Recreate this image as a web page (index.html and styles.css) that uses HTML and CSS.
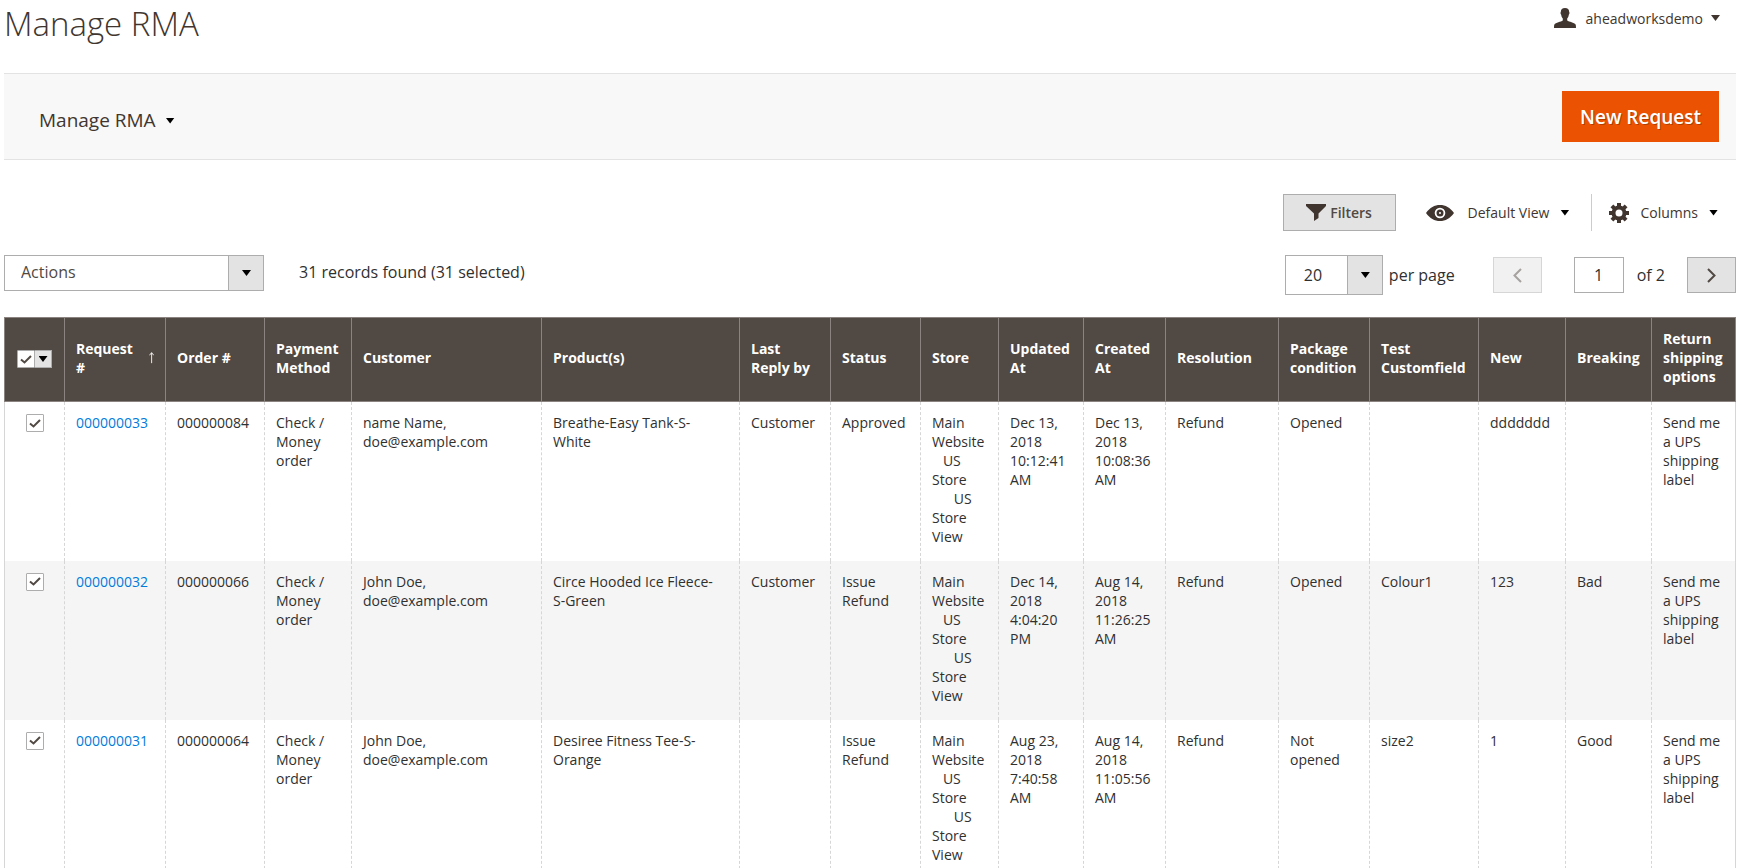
FILE: index.html
```html
<!DOCTYPE html>
<html lang="en">
<head>
  <meta charset="UTF-8" />
  <meta name="viewport" content="width=device-width, initial-scale=1" />
  <title>Manage RMA</title>
  <link rel="stylesheet" href="styles.css">
</head>
<body>
  <header class="page-header">
    <h1 class="page-title">Manage RMA</h1>
    <button type="button" class="user-menu">
      <svg class="icon-user" viewBox="0 0 22 20" width="22" height="20" fill="#41362f"><path d="M11 0C8.300 0 6.800 1.600 6.800 4C6.300 4.300 6.400 6.200 7.200 6.700C7.400 8.400 8 9.600 8.800 10.400V12.600C7 14 1.600 14.600 .4 16.400C0 17.200 0 18.800 0 20H22C22 18.800 22 17.200 21.600 16.400C20.400 14.600 15 14 13.200 12.600V10.400C14 9.600 14.600 8.400 14.800 6.700C15.600 6.200 15.700 4.300 15.200 4C15.200 1.600 13.700 0 11 0Z"/></svg>
      <span>aheadworksdemo</span>
      <span class="caret caret-soft"></span>
    </button>
  </header>

  <div class="page-actions">
    <button type="button" class="section-menu">Manage RMA <span class="caret"></span></button>
    <button type="button" class="btn-primary">New Request</button>
  </div>

  <div class="grid-controls">
    <button type="button" class="btn-filters">
      <svg viewBox="0 0 20 17" width="20" height="17" fill="#41362f"><path d="M0 0H20V2L12.500 9.500V14L8 17V9.500L0 2Z"/></svg>
      Filters
    </button>
    <button type="button" class="control view-control">
      <svg viewBox="0 0 28 16" width="28" height="16"><path fill="#41362f" fill-rule="evenodd" d="M0 8C4 2.500 8.500 0 14 0S24 2.500 28 8C24 13.500 19.500 16 14 16S4 13.500 0 8ZM14 2.700A5.300 5.300 0 1 0 14 13.300A5.300 5.300 0 1 0 14 2.700Z"/><circle cx="14" cy="8" r="3.500" fill="#41362f"/><circle cx="14" cy="8" r="1" fill="#fff"/></svg>
      <span>Default View</span>
      <span class="caret"></span>
    </button>
    <button type="button" class="control columns-control">
      <svg viewBox="-10 -10 20 20" width="20" height="20"><g fill="#41362f"><rect id="tooth" x="-2" y="-10" width="4" height="20"/><use href="#tooth" transform="rotate(45)"/><use href="#tooth" transform="rotate(90)"/><use href="#tooth" transform="rotate(135)"/><circle r="7.500"/></g><circle r="3.500" fill="#fff"/></svg>
      <span>Columns</span>
      <span class="caret"></span>
    </button>
  </div>

  <div class="grid-toolbar">
    <div class="select-box actions-box">
      <select class="select" aria-label="Actions">
        <option>Actions</option>
      </select>
    </div>
    <div class="records">31 records found (31 selected)</div>
    <div class="pager">
      <div class="select-box limit-box">
        <select class="select" id="limit">
          <option>20</option>
        </select>
      </div>
      <label class="limit-label" for="limit">per page</label>
      <button type="button" class="page-btn" aria-label="Previous page" disabled>
        <svg viewBox="0 0 9 15" width="9" height="15" fill="none" stroke="#a6a29f" stroke-width="2"><path d="M8 1L1.500 7.500L8 14"/></svg>
      </button>
      <input type="text" class="page-input" id="page" value="1">
      <label class="page-label" for="page">of 2</label>
      <button type="button" class="page-btn" aria-label="Next page">
        <svg viewBox="0 0 9 15" width="9" height="15" fill="none" stroke="#514943" stroke-width="2"><path d="M1 1L7.500 7.500L1 14"/></svg>
      </button>
    </div>
  </div>

  <table class="data-grid">
    <colgroup>
      <col class="col-check"><col class="col-request"><col class="col-order"><col class="col-payment">
      <col class="col-customer"><col class="col-product"><col class="col-reply"><col class="col-status">
      <col class="col-store"><col class="col-updated"><col class="col-created"><col class="col-resolution">
      <col class="col-package"><col class="col-custom"><col class="col-new"><col class="col-breaking">
      <col class="col-shipping">
    </colgroup>
    <thead>
      <tr>
        <th class="check-cell">
          <div class="mass-select">
            <input type="checkbox" class="checkbox" aria-label="Select all" checked>
            <button type="button" class="mass-toggle" aria-label="Selection options"><span class="caret"></span></button>
          </div>
        </th>
        <th><div class="sorted"><span>Request #</span> <svg viewBox="0 0 6 13" width="6" height="13" fill="none" stroke="#fff"><path d="M3 13V1M.5 4L3 1L5.500 4"/></svg></div></th>
        <th>Order #</th>
        <th>Payment Method</th>
        <th>Customer</th>
        <th>Product(s)</th>
        <th>Last Reply by</th>
        <th>Status</th>
        <th>Store</th>
        <th>Updated At</th>
        <th>Created At</th>
        <th>Resolution</th>
        <th>Package condition</th>
        <th>Test Customfield</th>
        <th>New</th>
        <th>Breaking</th>
        <th>Return shipping options</th>
      </tr>
    </thead>
    <tbody>
      <tr>
        <td class="check-cell"><input type="checkbox" class="checkbox" aria-label="Select 000000033" checked></td>
        <td><a href="#">000000033</a></td>
        <td>000000084</td>
        <td>Check / Money order</td>
        <td>name Name,<br>doe@example.com</td>
        <td>Breathe-Easy Tank-S-White</td>
        <td>Customer</td>
        <td>Approved</td>
        <td>Main Website<br>&nbsp;&nbsp;&nbsp;US Store<br>&nbsp;&nbsp;&nbsp;&nbsp;&nbsp;&nbsp;US Store View</td>
        <td>Dec 13, 2018 10:12:41 AM</td>
        <td>Dec 13, 2018 10:08:36 AM</td>
        <td>Refund</td>
        <td>Opened</td>
        <td></td>
        <td>ddddddd</td>
        <td></td>
        <td>Send me a UPS shipping label</td>
      </tr>
      <tr>
        <td class="check-cell"><input type="checkbox" class="checkbox" aria-label="Select 000000032" checked></td>
        <td><a href="#">000000032</a></td>
        <td>000000066</td>
        <td>Check / Money order</td>
        <td>John Doe,<br>doe@example.com</td>
        <td>Circe Hooded Ice Fleece-<span class="nowrap">S-Green</span></td>
        <td>Customer</td>
        <td>Issue Refund</td>
        <td>Main Website<br>&nbsp;&nbsp;&nbsp;US Store<br>&nbsp;&nbsp;&nbsp;&nbsp;&nbsp;&nbsp;US Store View</td>
        <td>Dec 14, 2018 4:04:20 PM</td>
        <td>Aug 14, 2018 11:26:25 AM</td>
        <td>Refund</td>
        <td>Opened</td>
        <td>Colour1</td>
        <td>123</td>
        <td>Bad</td>
        <td>Send me a UPS shipping label</td>
      </tr>
      <tr>
        <td class="check-cell"><input type="checkbox" class="checkbox" aria-label="Select 000000031" checked></td>
        <td><a href="#">000000031</a></td>
        <td>000000064</td>
        <td>Check / Money order</td>
        <td>John Doe,<br>doe@example.com</td>
        <td>Desiree Fitness Tee-S-Orange</td>
        <td></td>
        <td>Issue Refund</td>
        <td>Main Website<br>&nbsp;&nbsp;&nbsp;US Store<br>&nbsp;&nbsp;&nbsp;&nbsp;&nbsp;&nbsp;US Store View</td>
        <td>Aug 23, 2018 7:40:58 AM</td>
        <td>Aug 14, 2018 11:05:56 AM</td>
        <td>Refund</td>
        <td>Not opened</td>
        <td>size2</td>
        <td>1</td>
        <td>Good</td>
        <td>Send me a UPS shipping label</td>
      </tr>
    </tbody>
  </table>
</body>
</html>
```
FILE: styles.css
```css
* {
  box-sizing: border-box;
}
body {
  margin: 0;
  padding: 0 6px 0 4px;
  font-family: 'Open Sans', sans-serif;
  font-size: 14px;
  line-height: 19px;
  color: #303030;
  background: #fff;
}
button, input, select {
  font: inherit;
  color: inherit;
  margin: 0;
  border-radius: 0;
}
button {
  padding: 0;
  border: none;
  background: none;
  cursor: pointer;
}
.nowrap {
  white-space: nowrap;
}
.caret {
  width: 9px;
  height: 6px;
  background: #000;
  clip-path: polygon(0 0, 100% 0, 50% 100%);
}
.caret-soft {
  background: #41362f;
}

/* header */
.page-header {
  display: flex;
  justify-content: space-between;
  align-items: flex-start;
  height: 73px;
  padding-right: 16px;
}
.page-title {
  margin: 0;
  font-size: 33px;
  line-height: 48px;
  font-weight: 300;
  color: #41362f;
}
.user-menu {
  display: flex;
  align-items: center;
  gap: 8px;
  height: 36px;
  color: #41362f;
}
.user-menu .icon-user {
  margin-right: 2px;
}
.page-actions {
  display: flex;
  justify-content: space-between;
  align-items: center;
  height: 87px;
  padding: 0 17px 0 35px;
  background: #f8f8f8;
  border-top: 1px solid #e3e3e3;
  border-bottom: 1px solid #e3e3e3;
}
.section-menu {
  display: flex;
  align-items: center;
  gap: 10px;
  padding-top: 8px;
  font-size: 19px;
  color: #41362f;
}
.btn-primary {
  height: 51px;
  padding: 2px 18px 0;
  background: #eb5202;
  color: #fff;
  font-size: 19px;
  font-weight: 600;
  text-shadow: 1px 1px 0 rgba(0,0,0,0.25);
}

/* grid controls */
.grid-controls {
  display: flex;
  justify-content: flex-end;
  align-items: center;
  margin-top: 34px;
  padding-right: 18px;
}
.btn-filters {
  display: flex;
  align-items: center;
  justify-content: center;
  gap: 4px;
  width: 113px;
  height: 37px;
  background: #e3e3e3;
  border: 1px solid #adadad;
  color: #514943;
  font-weight: 600;
}
.control {
  display: flex;
  align-items: center;
  gap: 11px;
  height: 37px;
  color: #41362f;
}
.view-control {
  margin-left: 30px;
  padding-right: 22px;
  border-right: 1px solid #ccc;
}
.view-control svg {
  margin-right: 3px;
}
.columns-control {
  padding-left: 17px;
}

/* actions and paging */
.grid-toolbar {
  display: flex;
  align-items: flex-start;
  margin: 24px 0 22px;
  font-size: 16px;
}
.select-box {
  position: relative;
}
.select-box::after {
  content: '';
  position: absolute;
  right: 13px;
  top: calc(50% - 3px);
  width: 9px;
  height: 6px;
  background: #000;
  clip-path: polygon(0 0, 100% 0, 50% 100%);
  pointer-events: none;
}
.select {
  appearance: none;
  width: 100%;
  height: 36px;
  padding: 0 40px 2px 16px;
  border: 1px solid #adadad;
  background: linear-gradient(to left, #e3e3e3 34px, #adadad 34px, #adadad 35px, #fff 35px);
  color: #514943;
}
.actions-box {
  width: 260px;
}
.limit-box {
  width: 98px;
}
.limit-box .select {
  height: 40px;
  padding: 0 36px 0 18px;
  color: #303030;
}
.records {
  padding: 8px 0 0 35px;
}
.pager {
  display: flex;
  align-items: center;
  margin-left: auto;
}
.limit-label {
  margin: 0 38px 0 6px;
}
.page-btn {
  display: flex;
  align-items: center;
  justify-content: center;
  width: 49px;
  height: 36px;
  background: #e3e3e3;
  border: 1px solid #adadad;
}
.page-btn:disabled {
  background: #f1f1f1;
  border-color: #d6d6d6;
}
.page-input {
  width: 50px;
  height: 36px;
  margin-left: 32px;
  padding: 0;
  border: 1px solid #adadad;
  text-align: center;
}
.page-label {
  margin: 0 22px 0 13px;
}

/* data grid */
.data-grid {
  width: 100%;
  table-layout: fixed;
  border-collapse: collapse;
}
.col-check { width: 60px; }
.col-request { width: 101px; }
.col-order { width: 99px; }
.col-payment { width: 87px; }
.col-customer { width: 190px; }
.col-product { width: 198px; }
.col-reply { width: 91px; }
.col-status { width: 90px; }
.col-store { width: 78px; }
.col-updated { width: 85px; }
.col-created { width: 82px; }
.col-resolution { width: 113px; }
.col-package { width: 91px; }
.col-custom { width: 109px; }
.col-new { width: 87px; }
.col-breaking { width: 86px; }
.col-shipping { width: 84px; }
.data-grid th {
  height: 84px;
  padding: 0 11px 4px;
  border: 1px solid #8a837f;
  background: #514943;
  color: #fff;
  font-weight: 700;
  text-align: left;
  vertical-align: middle;
}
.data-grid td {
  height: 159px;
  padding: 11px 11px 12px;
  border: 0 dashed #d6d6d6;
  border-width: 0 1px;
  vertical-align: top;
}
.data-grid td:first-child {
  border-left-style: solid;
}
.data-grid td:last-child {
  border-right-style: solid;
}
.data-grid tbody tr:nth-child(even) {
  background: #f5f5f5;
}
.data-grid a {
  color: #007bdb;
  text-decoration: none;
}
.data-grid .check-cell {
  padding-left: 0;
  padding-right: 0;
  text-align: center;
}
.data-grid td.check-cell {
  padding-top: 12px;
}
.checkbox {
  appearance: none;
  display: inline-block;
  width: 18px;
  height: 18px;
  border: 1px solid #adadad;
  border-radius: 1px;
  background: #fff;
  vertical-align: top;
}
.checkbox:checked {
  background: #fff url("data:image/svg+xml,%3Csvg xmlns='http://www.w3.org/2000/svg' viewBox='0 0 12 9'%3E%3Cpath d='M1 4.500L4.500 7.500L11 1' fill='none' stroke='%23514943' stroke-width='2'/%3E%3C/svg%3E") center / 12px 9px no-repeat;
}
.mass-select {
  display: flex;
  justify-content: center;
  padding-top: 3px;
}
.mass-toggle {
  display: flex;
  align-items: center;
  justify-content: center;
  width: 17px;
  height: 18px;
  background: #e3e3e3;
  border: 1px solid #adadad;
  border-left: none;
}
.sorted {
  display: flex;
  align-items: center;
  justify-content: space-between;
  gap: 12px;
}
```
